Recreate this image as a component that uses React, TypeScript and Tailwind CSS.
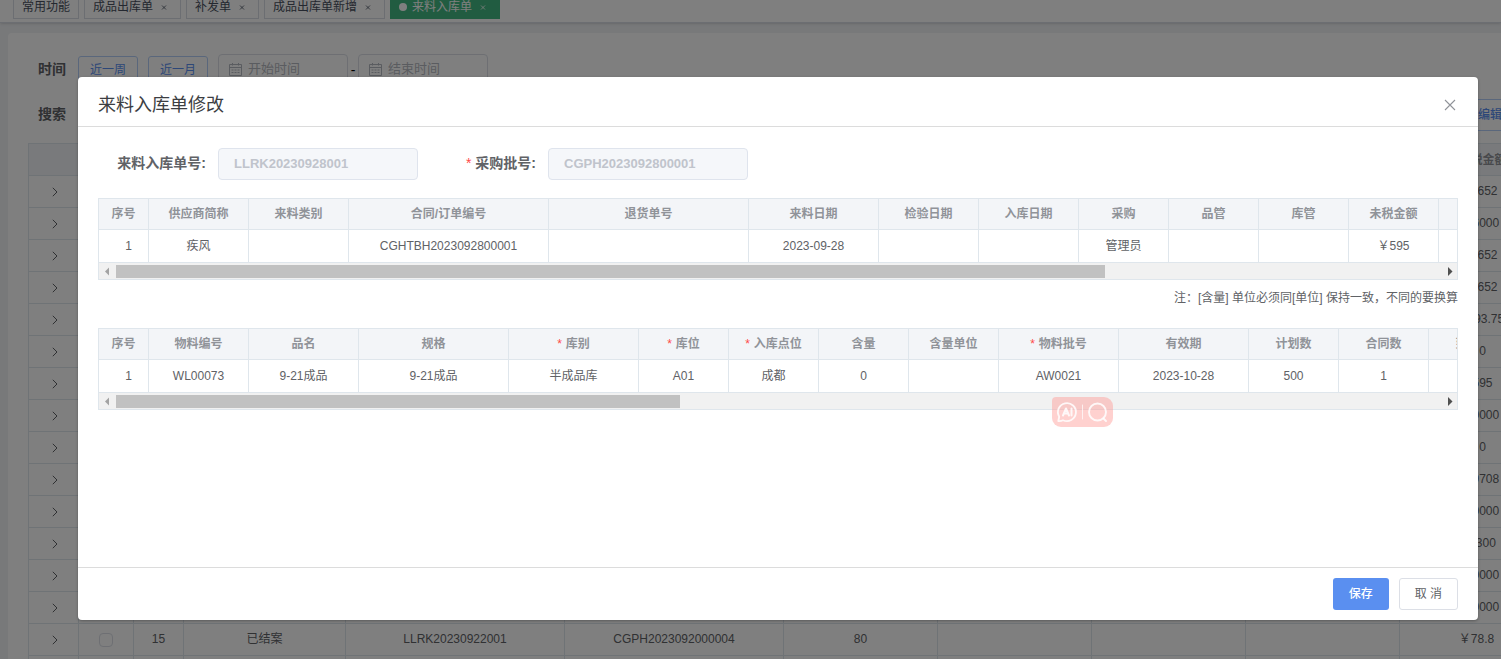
import React from "react";

type Column = { title: string; width: number; required?: boolean };

const tabs = [
  { title: "常用功能", closable: false },
  { title: "成品出库单", closable: true },
  { title: "补发单", closable: true },
  { title: "成品出库单新增", closable: true },
  { title: "来料入库单", closable: true, active: true },
];

const listColumns: Column[] = [
  { title: "", width: 50 },
  { title: "", width: 55 },
  { title: "", width: 50 },
  { title: "", width: 162 },
  { title: "", width: 219 },
  { title: "", width: 219 },
  { title: "", width: 154 },
  { title: "", width: 154 },
  { title: "", width: 154 },
  { title: "", width: 154 },
  { title: "总未税金额", width: 154 },
];

const amounts = [
  "￥9.652",
  "￥16000",
  "￥9.652",
  "￥9.652",
  "￥2193.75",
  "￥0",
  "￥595",
  "￥10000",
  "￥0",
  "￥19708",
  "￥10000",
  "￥9300",
  "￥10000",
  "￥10000",
  "￥78.8",
  "",
];

const detailCells: Record<number, string[]> = {
  14: ["已结案", "LLRK20230922001", "CGPH2023092000004", "80", "", "", ""],
};

const orderColumns: Column[] = [
  { title: "序号", width: 50 },
  { title: "供应商简称", width: 100 },
  { title: "来料类别", width: 100 },
  { title: "合同/订单编号", width: 200 },
  { title: "退货单号", width: 200 },
  { title: "来料日期", width: 130 },
  { title: "检验日期", width: 100 },
  { title: "入库日期", width: 100 },
  { title: "采购", width: 90 },
  { title: "品管", width: 90 },
  { title: "库管", width: 90 },
  { title: "未税金额", width: 90 },
  { title: "", width: 90 },
];
const orderRow = ["1", "疾风", "", "CGHTBH2023092800001", "", "2023-09-28", "", "", "管理员", "", "", "￥595", ""];

const materialColumns: Column[] = [
  { title: "序号", width: 50 },
  { title: "物料编号", width: 100 },
  { title: "品名", width: 110 },
  { title: "规格", width: 150 },
  { title: "库别", width: 130, required: true },
  { title: "库位", width: 90, required: true },
  { title: "入库点位", width: 90, required: true },
  { title: "含量", width: 90 },
  { title: "含量单位", width: 90 },
  { title: "物料批号", width: 120, required: true },
  { title: "有效期", width: 130 },
  { title: "计划数", width: 90 },
  { title: "合同数", width: 90 },
  { title: "到货数", width: 90 },
];
const materialRow = ["1", "WL00073", "9-21成品", "9-21成品", "半成品库", "A01", "成都", "0", "", "AW0021", "2023-10-28", "500", "1", ""];

const totalWidth = (columns: Column[]) => columns.reduce((sum, c) => sum + c.width, 0);

function ColGroup({ columns }: { columns: Column[] }) {
  return (
    <colgroup>
      {columns.map((c, i) => (
        <col key={i} style={{ width: c.width }} />
      ))}
    </colgroup>
  );
}

function CalendarIcon() {
  return (
    <svg className="h-[13px] w-[13px] shrink-0" viewBox="0 0 13 13" fill="none" stroke="#b4b8c0" aria-hidden="true">
      <path d="M.5 1.500h12v11H.5zM.5 4.500h12M3.500 0v2.500M9.500 0v2.500" />
      <path d="M2.500 7h2M5.500 7h2M8.500 7h2M2.500 9.500h2M5.500 9.500h2M8.500 9.500h2" />
    </svg>
  );
}

function DateBox({ label }: { label: string }) {
  return (
    <label className="flex h-8 w-[130px] items-center gap-[6px] rounded border border-[#dcdfe6] bg-white pb-[2px] pl-[10px]">
      <CalendarIcon />
      <input className="w-full min-w-0 bg-transparent text-[13px] outline-none placeholder:text-[#b4b8c0]" placeholder={label} aria-label={label} />
    </label>
  );
}

function TabBar() {
  return (
    <nav className="relative flex h-[23px] items-end gap-[5px] overflow-hidden border-b border-[#d8dce5] bg-white pb-[3px] pl-[13px] text-xs shadow">
      {tabs.map((t) => (
        <a
          key={t.title}
          href="#"
          className={
            t.active
              ? "flex h-[26px] items-center border border-[#42b983] bg-[#42b983] px-2 pt-px text-white"
              : "flex h-[26px] items-center border border-[#d8dce5] bg-white px-2 pt-px text-[#495060]"
          }
        >
          {t.active && <span className="mr-[5px] h-2 w-2 rounded-full bg-white" />}
          {t.title}
          {t.closable && (
            <svg className="ml-[7px] mr-1 h-2 w-2" viewBox="0 0 8 8" stroke="currentColor" strokeWidth=".9" strokeOpacity=".9" aria-hidden="true">
              <path d="M2 2.500l4 4M6 2.500L2 6.500" />
            </svg>
          )}
        </a>
      ))}
    </nav>
  );
}

function ListTable() {
  return (
    <div className="mt-3 overflow-hidden border-l border-t border-[#dfe6ec]">
      <table className="table-fixed border-separate border-spacing-0 text-center text-xs text-[#606266]" style={{ width: totalWidth(listColumns) }}>
        <ColGroup columns={listColumns} />
        <thead>
          <tr className="h-8 bg-[#f3f5f8] text-[#909399]">
            {listColumns.map((c, i) => (
              <th key={i} className="whitespace-nowrap border-b border-r border-[#dfe6ec] p-0">
                {c.title}
              </th>
            ))}
          </tr>
        </thead>
        <tbody>
          {amounts.map((amount, r) => (
            <tr key={r} className="h-8">
              <td className="border-b border-r border-[#dfe6ec] p-0">
                <svg className="mx-auto" width="10" height="10" viewBox="0 0 10 10" fill="none" stroke="#606266" aria-hidden="true">
                  <path d="M3.800 .8L8 5 3.800 9.200" />
                </svg>
              </td>
              <td className="border-b border-r border-[#dfe6ec] p-0">
                <input type="checkbox" aria-label="选择" className="mx-auto block h-[14px] w-[14px] appearance-none rounded-sm border border-[#dcdfe6] bg-white" />
              </td>
              <td className="border-b border-r border-[#dfe6ec] p-0 pb-px">{amount && r + 1}</td>
              {(detailCells[r] ?? ["", "", "", "", "", "", ""]).map((v, i) => (
                <td key={i} className="border-b border-r border-[#dfe6ec] p-0 pb-px">
                  {v}
                </td>
              ))}
              <td className="border-b border-r border-[#dfe6ec] p-0 pb-px">{amount}</td>
            </tr>
          ))}
        </tbody>
      </table>
    </div>
  );
}

function DialogTable({ columns, row, shown }: { columns: Column[]; row: string[]; shown: number }) {
  return (
    <div className="border border-[#dfe6ec]">
      <div className="overflow-hidden">
        <table className="table-fixed border-separate border-spacing-0 text-center text-xs text-[#606266]" style={{ width: totalWidth(columns) }}>
          <ColGroup columns={columns} />
          <thead>
            <tr className="h-[31px] bg-[#f3f5f8] text-[#909399]">
              {columns.map((c, i) => (
                <th key={i} className="border-b border-r border-[#dfe6ec] p-0">
                  {c.required && <span className="mr-1 font-normal text-[#ff4949]">*</span>}
                  {c.title}
                </th>
              ))}
            </tr>
          </thead>
          <tbody>
            <tr className="h-[33px]">
              {row.map((v, i) => (
                <td key={i} className="border-b border-r border-[#dfe6ec] p-0 first:pl-[10px]">
                  {v}
                </td>
              ))}
            </tr>
          </tbody>
        </table>
      </div>
      <div className="flex h-4 items-center bg-[#f1f1f1]">
        <svg className="h-4 w-[17px] shrink-0" viewBox="0 0 17 16" fill="#a3a3a3" aria-hidden="true">
          <path d="M10 4.5v8L6 8.5z" />
        </svg>
        <div className="flex-1 pt-px">
          <div className="h-[13px] bg-[#c1c1c1]" style={{ width: `${(shown * 100).toFixed(1)}%` }} />
        </div>
        <svg className="h-4 w-[17px] shrink-0" viewBox="0 0 17 16" fill="#505050" aria-hidden="true">
          <path d="M8 4v9l4.500-4.500z" />
        </svg>
      </div>
    </div>
  );
}

function Field({ id, label, value, required }: { id: string; label: string; value: string; required?: boolean }) {
  return (
    <div className="flex items-center">
      <label htmlFor={id} className="w-[120px] pb-[2px] pr-3 text-right text-sm font-bold text-[#606266]">
        {required && <span className="mr-1 font-normal text-[#ff4949]">*</span>}
        {label}:
      </label>
      <input
        id={id}
        disabled
        defaultValue={value}
        className="h-8 w-[200px] rounded border border-[#dfe4ed] bg-[#f5f7fa] px-[15px] pb-[2px] text-[13px] font-bold text-[#c0c4cc]"
      />
    </div>
  );
}

function AssistantBadge() {
  return (
    <button
      type="button"
      aria-label="AI"
      className="absolute left-[974px] top-[320px] flex h-[30px] w-[61px] items-center justify-center rounded-[9px] rounded-tl-sm bg-[#ff9a95]/45"
    >
      <svg width="61" height="30" viewBox="0 0 61 30" fill="none" stroke="#fff" strokeOpacity=".85" strokeLinecap="round" strokeLinejoin="round" aria-hidden="true">
        <path strokeWidth="1.8" d="M6.300 24l.9-4.300A9 9 0 1 1 11 23.200c-1.500.8-3 .9-4.700.8z" />
        <path strokeWidth="2" d="M11 18.500l3-7 3 7M12.200 16.500h3.800M19.500 11.500v7" />
        <path strokeWidth="1" strokeOpacity=".7" d="M30.500 8v14" />
        <circle cx="45.500" cy="15" r="8.500" strokeWidth="1.900" />
        <path strokeWidth="1.900" d="M51.500 21.500l2.500 2.500" />
      </svg>
    </button>
  );
}

function EditDialog() {
  return (
    <section role="dialog" aria-labelledby="dialog-title" className="relative rounded-sm bg-white shadow-[0_1px_3px_rgba(0,0,0,0.3)]">
      <header className="flex h-[50px] items-center justify-between border-b border-[#dcdcdc] px-5 pt-[6px]">
        <h1 id="dialog-title" className="text-lg leading-6 text-[#3c3e42]">
          来料入库单修改
        </h1>
        <button type="button" aria-label="关闭" className="flex h-4 w-4 items-center justify-center">
          <svg width="12" height="12" viewBox="0 0 12 12" stroke="#909399" strokeWidth="1.1" aria-hidden="true">
            <path d="M1 1l10 10M11 1L1 11" />
          </svg>
        </button>
      </header>
      <div className="min-h-[440px] px-5 pt-[21px]">
        <form className="mb-[18px] flex gap-[10px]">
          <Field id="receipt-no" label="来料入库单号" value="LLRK20230928001" />
          <Field id="batch-no" label="采购批号" value="CGPH2023092800001" required />
        </form>
        <DialogTable columns={orderColumns} row={orderRow} shown={1358 / 1818} />
        <p className="mb-5 mt-2 text-right text-xs leading-5 text-[#606266]">注：[含量] 单位必须同[单位] 保持一致，不同的要换算</p>
        <DialogTable columns={materialColumns} row={materialRow} shown={1358 / 3188} />
      </div>
      <footer className="flex justify-end gap-[10px] border-t border-[#dcdcdc] px-5 py-[10px]">
        <button type="button" className="h-8 rounded-[3px] bg-[#5a8ff0] px-4 text-xs font-medium text-white">
          保存
        </button>
        <button type="button" className="h-8 rounded-[3px] border border-[#dcdfe6] bg-white px-[15px] text-xs text-[#606266]">
          取 消
        </button>
      </footer>
      <AssistantBadge />
    </section>
  );
}

export default function App() {
  return (
    <div className="relative h-screen overflow-hidden bg-[#f0f2f5] font-['Liberation_Sans','Noto_Sans_CJK_SC',sans-serif]">
      <TabBar />
      <main className="ml-2 mt-[10px] rounded-tl bg-white pl-5 pt-[21px]">
        <div className="flex h-8 items-center pl-[10px]">
          <span className="w-10 pb-[2px] text-sm font-bold text-[#606266]">时间</span>
          <button type="button" className="mr-[10px] h-7 rounded-[3px] border border-[#b5cff8] px-[11px] text-xs text-[#5a8ff0]">
            近一周
          </button>
          <button type="button" className="mr-[10px] h-7 rounded-[3px] border border-[#b5cff8] px-[11px] text-xs text-[#5a8ff0]">
            近一月
          </button>
          <DateBox label="开始时间" />
          <span className="w-[10px] text-center text-sm text-black">-</span>
          <DateBox label="结束时间" />
        </div>
        <div className="mt-[13px] flex h-8 items-center pl-[10px]">
          <span className="pb-[2px] text-sm font-bold text-[#606266]">搜索</span>
          <button type="button" className="-mr-[17px] ml-auto h-8 rounded-[3px] border border-[#b5cff8] px-[15px] text-xs font-medium text-[#5a8ff0]">
            编辑
          </button>
        </div>
        <ListTable />
      </main>
      <div className="absolute inset-0 bg-black/50 pl-[78px] pr-[23px] pt-[77px]">
        <EditDialog />
      </div>
    </div>
  );
}
